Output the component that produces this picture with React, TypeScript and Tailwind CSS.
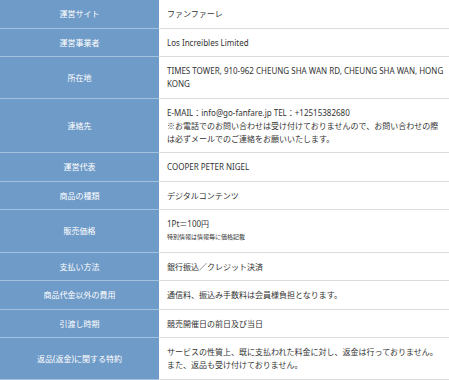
import React from "react";

type Row = { label: string; content: React.ReactNode };

const rows: Row[] = [
  { label: "運営サイト", content: "ファンファーレ" },
  { label: "運営事業者", content: "Los Increibles Limited" },
  {
    label: "所在地",
    content: "TIMES TOWER, 910-962 CHEUNG SHA WAN RD, CHEUNG SHA WAN, HONG KONG",
  },
  {
    label: "連絡先",
    content: (
      <>
        E-MAIL：info@go-fanfare.jp TEL：+12515382680
        <br />
        <span className="font-['Noto_Sans_CJK_JP',sans-serif]">
          ※お電話でのお問い合わせは受け付けておりませんので、お問い合わせの際は必ずメールでのご連絡をお願いいたします。
        </span>
      </>
    ),
  },
  { label: "運営代表", content: "COOPER PETER NIGEL" },
  { label: "商品の種類", content: "デジタルコンテンツ" },
  {
    label: "販売価格",
    content: (
      <>
        <div>1Pt＝100円</div>
        <div className="text-[6px] leading-[14px]">特別情報は情報毎に価格記載</div>
      </>
    ),
  },
  { label: "支払い方法", content: "銀行振込／クレジット決済" },
  { label: "商品代金以外の費用", content: "通信料、振込み手数料は会員様負担となります。" },
  { label: "引渡し時期", content: "競売開催日の前日及び当日" },
  {
    label: "返品(返金)に関する特約",
    content: (
      <>
        サービスの性質上、既に支払われた料金に対し、返金は行っておりません。
        <br />
        また、返品も受け付けておりません。
      </>
    ),
  },
];

export default function App() {
  return (
    <div
      className="w-[449px] h-[380px] overflow-hidden bg-white text-[8px] leading-[13px]"
      style={{ fontFamily: '"Noto Sans", "Noto Sans CJK JP", sans-serif' }}
    >
      {rows.map((r, i) => (
        <div key={i} className="flex">
          <div className="w-[159px] shrink-0 bg-[#6f9bc8] border-b border-[#a4c1df] text-white flex items-center justify-center px-2 text-center">
            {r.label}
          </div>
          <div className="flex-1 bg-white border-b border-[#dcdcdc] text-[#333333] pl-[8px] pr-[3px] py-[7.25px]">
            {r.content}
          </div>
        </div>
      ))}
    </div>
  );
}
